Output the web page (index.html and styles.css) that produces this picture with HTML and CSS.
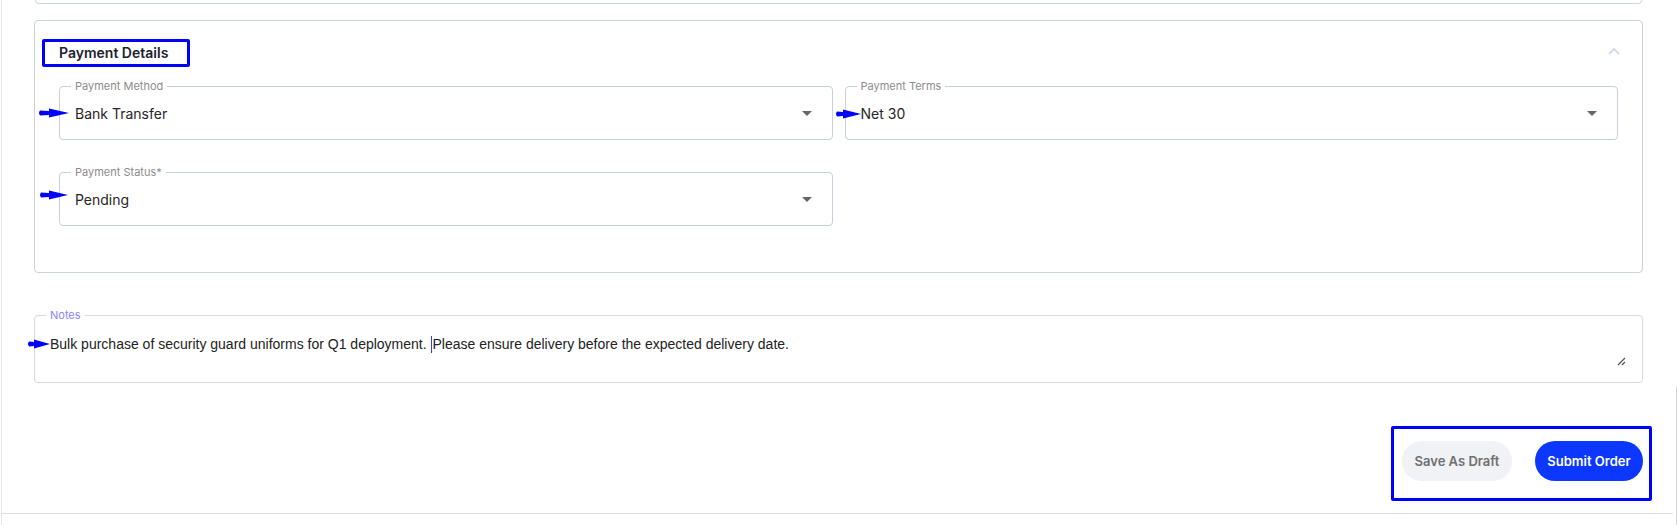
FILE: index.html
```html
<!DOCTYPE html>
<html lang="en">
<head>
    <meta charset="UTF-8">
    <meta name="viewport" content="width=device-width, initial-scale=1.0">
    <title>Order - Payment Details</title>
    <link rel="stylesheet" href="styles.css">
</head>
<body>
    <div class="page">
        <div class="prev-card"></div>

        <div class="section-card">
            <div class="section-head">
                <h3 class="section-title">Payment Details</h3>
                <button class="collapse-btn" aria-label="Collapse">
                    <svg width="12" height="8" viewBox="0 0 12 8"><path d="M1 7 L6 2 L11 7" fill="none" stroke="#d5dce7" stroke-width="2"/></svg>
                </button>
            </div>

            <div class="field-grid">
                <div class="field">
                    <span class="field-label">Payment Method</span>
                    <svg class="pointer" width="32" height="10" viewBox="0 0 32 10"><path d="M2 2.6 Q0 5 2 7.4 L11 7 L11 9.5 L31 5 L11 0.5 L11 3 Z" fill="#0000ff"/></svg>
                    <span class="field-value">Bank Transfer</span>
                    <span class="caret-down"></span>
                </div>
                <div class="field">
                    <span class="field-label">Payment Terms</span>
                    <svg class="pointer pointer-short" width="27" height="10" viewBox="0 0 27 10"><path d="M2 2.6 Q0 5 2 7.4 L8 7 L8 9.5 L26 5 L8 0.5 L8 3 Z" fill="#0000ff"/></svg>
                    <span class="field-value">Net 30</span>
                    <span class="caret-down"></span>
                </div>
                <div class="field">
                    <span class="field-label">Payment Status*</span>
                    <svg class="pointer pointer-up" width="30" height="10" viewBox="0 0 30 10"><path d="M2 2.6 Q0 5 2 7.4 L10 7 L10 9.5 L29 5 L10 0.5 L10 3 Z" fill="#0000ff"/></svg>
                    <span class="field-value">Pending</span>
                    <span class="caret-down"></span>
                </div>
            </div>
        </div>

        <div class="notes">
            <span class="notes-label">Notes</span>
            <svg class="pointer pointer-notes" width="24" height="10" viewBox="0 0 24 10"><path d="M2 2.6 Q0 5 2 7.4 L7 7 L7 9.5 L23 5 L7 0.5 L7 3 Z" fill="#0000ff"/></svg>
            <p class="notes-text">Bulk purchase of security guard uniforms for Q1 deployment. <span class="text-cursor"></span>Please ensure delivery before the expected delivery date.</p>
            <svg class="resize-grip" width="10" height="10" viewBox="0 0 10 10"><path d="M9 2 L2 9 M9 6 L6 9" stroke="#555" stroke-width="1.2"/></svg>
        </div>

        <div class="footer">
            <div class="actions">
                <button class="btn btn-draft">Save As Draft</button>
                <button class="btn btn-submit">Submit Order</button>
            </div>
            <div class="footer-line"></div>
        </div>
    </div>
</body>
</html>
```

FILE: styles.css
```css
body {
    margin: 0;
    background-color: #fff;
    font-family: Inter, "Noto Sans", sans-serif;
    color: #222;
}

.page {
    height: 525px;
    margin-left: 1px;
    border-left: 1px solid #e4e4e4;
    overflow: hidden;
}

.prev-card {
    height: 3px;
    margin: 0 35px 0 33px;
    border: 1px solid #cdd6e3;
    border-top: none;
    border-radius: 0 0 4px 4px;
}

.section-card {
    position: relative;
    margin: 16px 34px 0 32px;
    padding: 18px 24px 46px 24px;
    border: 1px solid #c9d3e2;
    border-radius: 4px;
}

.section-head {
    margin-bottom: 19px;
}

.section-title {
    display: inline-block;
    margin: 0 0 0 -17px;
    width: 128px;
    height: 22px;
    padding: 0 0 0 14px;
    box-sizing: content-box;
    border: 3px solid #0000ff;
    border-radius: 2px;
    font-size: 14px;
    font-weight: 600;
    line-height: 22px;
    color: #1b2231;
}

.collapse-btn {
    position: absolute;
    top: 22px;
    right: 22px;
    border: none;
    background: none;
    padding: 0;
    cursor: pointer;
}

.field-grid {
    display: grid;
    grid-template-columns: 1fr 1fr;
    column-gap: 12px;
    row-gap: 32px;
}

.field {
    position: relative;
    height: 52px;
    border: 1px solid #c5cfde;
    border-radius: 4px;
    display: flex;
    align-items: center;
    padding: 0 16px 0 15px;
}

.field-label {
    position: absolute;
    top: -8px;
    left: 11px;
    padding: 0 4px;
    background-color: #fff;
    font-size: 11px;
    line-height: 14px;
    color: #8c8c8c;
}

.field-value {
    flex: 1;
    font-size: 14px;
    color: #262626;
}

.caret-down {
    width: 0;
    height: 0;
    margin-right: 4px;
    border-left: 5px solid transparent;
    border-right: 5px solid transparent;
    border-top: 5px solid #666;
}

.pointer {
    position: absolute;
    left: -22px;
    top: 21px;
}

.pointer-short {
    left: -11px;
    top: 22px;
}

.pointer-up {
    left: -21px;
    top: 17px;
}

.notes {
    position: relative;
    height: 66px;
    margin: 42px 34px 0 32px;
    border: 1px solid #dadada;
    border-radius: 4px;
}

.notes-label {
    position: absolute;
    top: -8px;
    left: 11px;
    padding: 0 4px;
    background-color: #fff;
    font-size: 11px;
    line-height: 14px;
    color: #8585ff;
}

.pointer-notes {
    left: -8px;
    top: 23px;
}

.notes-text {
    margin: 0;
    padding: 19px 15px 0 15px;
    font-family: "Liberation Sans", Arial, sans-serif;
    font-size: 14px;
    line-height: 18px;
    color: #222;
}

.text-cursor {
    display: inline-block;
    width: 1px;
    height: 17px;
    margin-right: 1px;
    vertical-align: -4px;
    background-color: #3a3aff;
}

.resize-grip {
    position: absolute;
    right: 16px;
    bottom: 16px;
}

.footer {
    margin-top: 4px;
    height: 140px;
    border-right: 1px solid #d4d4d4;
    display: flex;
    flex-direction: column;
}

.actions {
    align-self: flex-end;
    display: flex;
    gap: 23px;
    margin: 39px 24px 0 0;
    padding: 12px 6px 17px 8px;
    border: 3px solid #0000ff;
    border-radius: 2px;
}

.btn {
    height: 40px;
    border: none;
    border-radius: 20px;
    font-family: Inter, "Noto Sans", sans-serif;
    font-size: 13px;
    font-weight: 600;
    cursor: pointer;
}

.btn-draft {
    width: 110px;
    background-color: #f1f2f5;
    color: #6f6f6f;
}

.btn-submit {
    width: 108px;
    background-color: #0b37ff;
    color: #fff;
}

.footer-line {
    margin: 12px 3px 0 0;
    border-top: 1px solid #dedede;
}
```
